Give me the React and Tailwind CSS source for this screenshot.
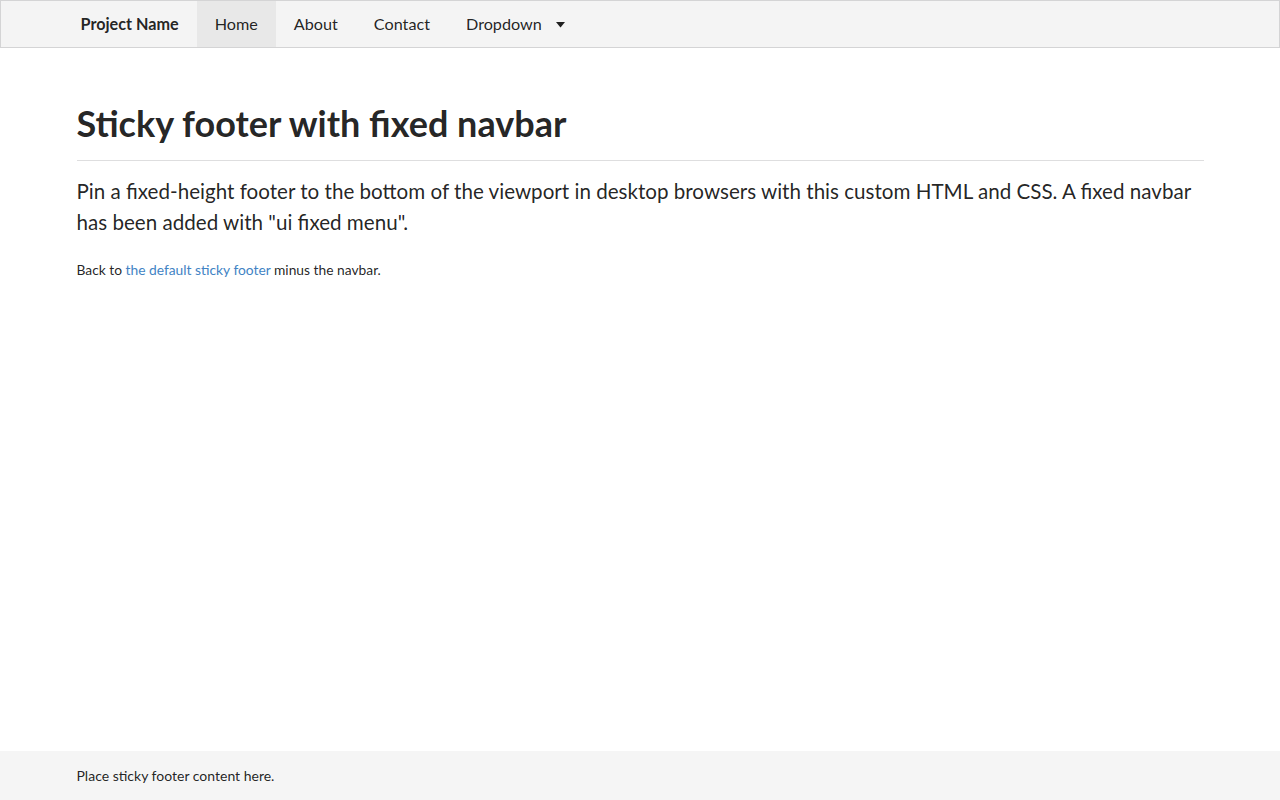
export default function App() {
  return (
    <div className="flex min-h-screen flex-col bg-white font-['Lato','Liberation_Sans',sans-serif] text-[rgba(0,0,0,0.87)]">
      <nav className="fixed left-0 right-0 top-0 z-10 h-12 border border-[#d4d4d5] bg-[#f4f4f4]">
        <div className="mx-auto flex h-full w-[1127px] items-stretch text-[16.2px]">
          <div className="flex items-center pl-1 pr-[18px] font-bold">Project Name</div>
          <a href="#" className="flex items-center bg-[#e8e8e8] px-[18px]">Home</a>
          <a href="#" className="flex items-center px-[18px]">About</a>
          <a href="#" className="flex items-center px-[18px]">Contact</a>
          <div className="flex items-center px-[18px]">
            Dropdown
            <svg className="ml-[14px] mt-[1px]" width="9" height="6" viewBox="0 0 9 6">
              <path d="M0 0 L9 0 L4.5 5.5 Z" fill="currentColor" />
            </svg>
          </div>
        </div>
      </nav>

      <main className="mx-auto w-[1127px] flex-1 pt-[101px]">
        <h1 className="border-b border-[rgba(34,36,38,0.15)] pb-[15px] text-[36px] font-bold leading-[44px]">
          Sticky footer with fixed navbar
        </h1>
        <p className="mt-[15px] text-[20.6px] leading-[31px]">
          Pin a fixed-height footer to the bottom of the viewport in desktop browsers with this custom HTML and CSS. A fixed navbar has been added with "ui fixed menu".
        </p>
        <p className="mt-[22px] text-[13.8px] leading-5">
          Back to <a href="#" className="text-[#4183c4]">the default sticky footer</a> minus the navbar.
        </p>
      </main>

      <footer className="h-[49px] bg-[#f5f5f5]">
        <div className="mx-auto flex h-full w-[1127px] items-center text-[14px]">
          Place sticky footer content here.
        </div>
      </footer>
    </div>
  )
}
